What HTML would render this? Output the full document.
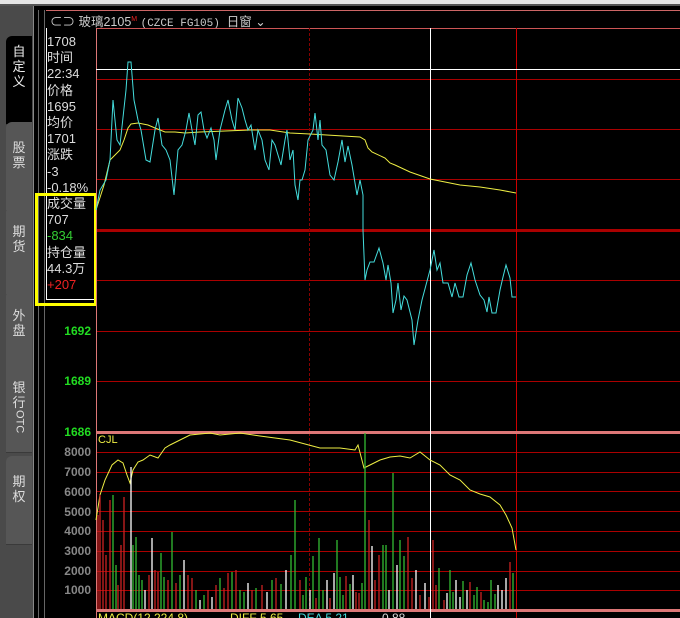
<!DOCTYPE html>
<html><head><meta charset="utf-8"><style>
body{margin:0;width:680px;height:618px;overflow:hidden;background:#000;font-family:"Liberation Sans","Noto Sans CJK SC",sans-serif;position:relative}
.a{position:absolute}
.tab{position:absolute;left:6px;width:26px;background:#565656;color:#ddd;font-size:13px;line-height:15px;text-align:center;border-top-left-radius:6px;border-bottom:1px solid #3a3a3a}
.p{position:absolute;left:47px;top:34px;color:#ddd;font-size:13px;line-height:16.2px;font-family:"Liberation Sans","Noto Sans CJK SC",sans-serif}
.yl{position:absolute;right:589px;font-size:12px;font-weight:bold;color:#888}
</style></head><body>
<div class="a" style="left:0;top:0;width:680px;height:4px;background:#e6e6e6"></div>
<div class="a" style="left:0;top:4px;width:680px;height:2px;background:#555"></div>
<div class="a" style="left:0;top:6px;width:33px;height:612px;background:#4a4a4a"></div>
<div class="tab" style="top:36px;height:80px;background:#000;color:#eee;padding-top:8px">自<br>定<br>义</div>
<div class="tab" style="top:122px;height:70px;padding-top:18px">股<br>票</div>
<div class="tab" style="top:206px;height:70px;padding-top:18px">期<br>货</div>
<div class="tab" style="top:290px;height:70px;padding-top:18px">外<br>盘</div>
<div class="tab" style="top:372px;height:72px;padding-top:8px">银<br>行<br><span style="display:inline-block;writing-mode:vertical-rl;font-size:11px">OTC</span></div>
<div class="tab" style="top:456px;height:70px;padding-top:18px">期<br>权</div>
<div class="a" style="left:33px;top:6px;width:1px;height:612px;background:#888"></div>
<div class="a" style="left:38px;top:10px;width:1px;height:608px;background:#666"></div>
<div class="a" style="left:44px;top:10px;width:1px;height:608px;background:#666"></div>
<div class="a" style="left:46px;top:10px;width:634px;height:1px;background:#c66"></div>
<div class="a" style="left:50px;top:11px;color:#ccc;font-size:12.5px;line-height:17px;white-space:nowrap">⊂⊃ 玻璃2105<sup style="color:#e22;font-size:7px">M</sup> <span style="font-family:'Liberation Mono',monospace;font-size:11px">(CZCE FG105)</span> &nbsp;日窗 ⌄</div>
<div class="a" style="left:46px;top:28px;width:49px;height:271px;border:1px solid #fff;border-top:none"></div>
<div class="p">1708<br>时间<br>22:34<br>价格<br>1695<br>均价<br>1701<br>涨跌<br>-3<br>-0.18%<br>成交量<br>707<br><span style="color:#3c3">-834</span><br>持仓量<br>44.3万<br><span style="color:#e22">+207</span></div>
<div class="a" style="left:35px;top:193px;width:56px;height:107px;border:3px solid #ff0"></div>
<div class="yl" style="top:324px;color:#2d2">1692</div>
<div class="yl" style="top:374px;color:#2d2">1689</div>
<div class="yl" style="top:425px;color:#2d2">1686</div>
<div class="yl" style="top:445px">8000</div><div class="yl" style="top:465px">7000</div><div class="yl" style="top:485px">6000</div><div class="yl" style="top:505px">5000</div><div class="yl" style="top:524px">4000</div><div class="yl" style="top:544px">3000</div><div class="yl" style="top:564px">2000</div><div class="yl" style="top:583px">1000</div>
<svg class="a" style="left:0;top:0" width="680" height="618">
<g stroke="#a00" stroke-width="1">
<line x1="96" y1="28.5" x2="680" y2="28.5" stroke="#c55"/>
<line x1="96" y1="79.5" x2="680" y2="79.5"/><line x1="96" y1="129.5" x2="680" y2="129.5"/><line x1="96" y1="179.5" x2="680" y2="179.5"/>
<line x1="96" y1="230.5" x2="680" y2="230.5" stroke-width="3"/>
<line x1="96" y1="280.5" x2="680" y2="280.5"/><line x1="96" y1="331.5" x2="680" y2="331.5"/><line x1="96" y1="381.5" x2="680" y2="381.5"/>
<line x1="96" y1="452.5" x2="680" y2="452.5"/><line x1="96" y1="472.5" x2="680" y2="472.5"/><line x1="96" y1="491.5" x2="680" y2="491.5"/><line x1="96" y1="511.5" x2="680" y2="511.5"/><line x1="96" y1="531.5" x2="680" y2="531.5"/><line x1="96" y1="551.5" x2="680" y2="551.5"/><line x1="96" y1="571.5" x2="680" y2="571.5"/><line x1="96" y1="590.5" x2="680" y2="590.5"/>
<line x1="309.5" y1="28" x2="309.5" y2="618" stroke-dasharray="3,2" stroke="#800"/>
<line x1="516.5" y1="28" x2="516.5" y2="618" stroke="#c00"/>
</g>
<line x1="96" y1="432.5" x2="680" y2="432.5" stroke="#d77" stroke-width="3"/>
<line x1="96" y1="610.5" x2="680" y2="610.5" stroke="#d77" stroke-width="3"/>
<line x1="96.5" y1="28" x2="96.5" y2="618" stroke="#d77"/>
<line x1="96" y1="69.5" x2="680" y2="69.5" stroke="#fff"/>
<line x1="430.5" y1="28" x2="430.5" y2="618" stroke="#fff"/>
<polyline fill="none" stroke="#ee4" stroke-width="1" points="96,210 104,185 110,160 115,155 120,150 124,140 128,128 131,124 138,123 148,125 155,128 165,132 175,132 185,133 200,132 250,130 270,130 290,133 310,134 360,137 365,140 368,148 372,152 385,158 390,163 395,165 410,172 430,179 460,185 480,187 500,190 516,193"/>
<polyline fill="none" stroke="#4dd" stroke-width="1" points="96,210 100,190 106,180 110,160 113,100 117,140 120,145 126,90 128,62 131,62 134,100 138,120 141,130 146,160 150,162 155,130 158,118 162,145 166,150 170,160 174,195 178,150 182,145 186,130 189,113 192,130 195,145 198,115 201,112 204,130 207,138 211,128 214,140 216,160 220,130 225,110 228,100 232,120 235,130 238,98 242,108 245,120 248,130 251,125 255,150 258,130 262,140 265,160 269,170 272,140 275,145 278,155 281,165 285,140 287,130 290,160 293,150 295,185 298,200 300,180 302,180 305,170 308,140 313,130 315,113 318,140 320,120 322,145 326,150 330,175 334,180 338,162 342,140 345,162 348,146 352,165 357,195 360,180 363,195 363,230 365,280 367,270 370,262 374,262 379,248 383,263 386,280 388,265 391,283 393,313 396,300 398,283 401,310 404,296 407,300 412,320 414,345 418,320 422,300 426,285 430,270 434,250 437,270 440,263 443,283 448,283 452,297 455,283 459,297 463,297 467,275 471,263 475,280 480,295 484,300 487,312 489,297 492,313 496,313 500,290 503,277 506,265 510,278 512,297 516,297"/>
<polyline fill="none" stroke="#ee4" points="96,520 100,495 105,480 112,465 118,460 123,463 127,475 130,483 133,470 138,462 143,460 150,455 158,458 165,448 170,445 180,440 190,435 200,434 210,433 220,435 240,433 260,436 290,440 320,448 340,448 355,450 358,445 364,468 370,465 380,460 390,457 400,456 410,458 420,452 430,460 440,465 450,475 460,480 470,490 480,494 490,497 500,505 506,515 512,528 516,550"/>
<g stroke-width="1.3">
<line x1="98" y1="609" x2="98" y2="515" stroke="#c22"/><line x1="100" y1="609" x2="100" y2="495" stroke="#c22"/><line x1="103" y1="609" x2="103" y2="520" stroke="#c22"/><line x1="106" y1="609" x2="106" y2="555" stroke="#c22"/><line x1="110" y1="609" x2="110" y2="500" stroke="#c22"/><line x1="113" y1="609" x2="113" y2="495" stroke="#3b3"/><line x1="116" y1="609" x2="116" y2="565" stroke="#3b3"/><line x1="118" y1="609" x2="118" y2="585" stroke="#c22"/><line x1="121" y1="609" x2="121" y2="545" stroke="#c22"/><line x1="124" y1="609" x2="124" y2="497" stroke="#c22"/><line x1="131" y1="609" x2="131" y2="467" stroke="#fff"/><line x1="133" y1="609" x2="133" y2="545" stroke="#3b3"/><line x1="136" y1="609" x2="136" y2="537" stroke="#3b3"/><line x1="139" y1="609" x2="139" y2="575" stroke="#3b3"/><line x1="142" y1="609" x2="142" y2="580" stroke="#3b3"/><line x1="145" y1="609" x2="145" y2="590" stroke="#fff"/><line x1="149" y1="609" x2="149" y2="575" stroke="#c22"/><line x1="152" y1="609" x2="152" y2="538" stroke="#fff"/><line x1="155" y1="609" x2="155" y2="570" stroke="#c22"/><line x1="158" y1="609" x2="158" y2="572" stroke="#c22"/><line x1="161" y1="609" x2="161" y2="553" stroke="#3b3"/><line x1="164" y1="609" x2="164" y2="577" stroke="#3b3"/><line x1="168" y1="609" x2="168" y2="580" stroke="#c22"/><line x1="172" y1="609" x2="172" y2="532" stroke="#3b3"/><line x1="176" y1="609" x2="176" y2="583" stroke="#c22"/><line x1="180" y1="609" x2="180" y2="575" stroke="#3b3"/><line x1="184" y1="609" x2="184" y2="560" stroke="#fff"/><line x1="188" y1="609" x2="188" y2="575" stroke="#c22"/><line x1="192" y1="609" x2="192" y2="578" stroke="#c22"/><line x1="196" y1="609" x2="196" y2="590" stroke="#3b3"/><line x1="200" y1="609" x2="200" y2="600" stroke="#fff"/><line x1="204" y1="609" x2="204" y2="595" stroke="#3b3"/><line x1="208" y1="609" x2="208" y2="590" stroke="#c22"/><line x1="212" y1="609" x2="212" y2="597" stroke="#fff"/><line x1="216" y1="609" x2="216" y2="585" stroke="#c22"/><line x1="220" y1="609" x2="220" y2="578" stroke="#3b3"/><line x1="224" y1="609" x2="224" y2="588" stroke="#c22"/><line x1="228" y1="609" x2="228" y2="573" stroke="#c22"/><line x1="232" y1="609" x2="232" y2="572" stroke="#3b3"/><line x1="236" y1="609" x2="236" y2="570" stroke="#c22"/><line x1="240" y1="609" x2="240" y2="590" stroke="#3b3"/><line x1="244" y1="609" x2="244" y2="592" stroke="#3b3"/><line x1="248" y1="609" x2="248" y2="583" stroke="#fff"/><line x1="252" y1="609" x2="252" y2="590" stroke="#c22"/><line x1="256" y1="609" x2="256" y2="588" stroke="#3b3"/><line x1="262" y1="609" x2="262" y2="585" stroke="#c22"/><line x1="267" y1="609" x2="267" y2="592" stroke="#fff"/><line x1="272" y1="609" x2="272" y2="580" stroke="#3b3"/><line x1="276" y1="609" x2="276" y2="578" stroke="#c22"/><line x1="281" y1="609" x2="281" y2="584" stroke="#3b3"/><line x1="286" y1="609" x2="286" y2="570" stroke="#fff"/><line x1="291" y1="609" x2="291" y2="555" stroke="#3b3"/><line x1="295" y1="609" x2="295" y2="500" stroke="#3b3"/><line x1="300" y1="609" x2="300" y2="580" stroke="#c22"/><line x1="303" y1="609" x2="303" y2="595" stroke="#3b3"/><line x1="306" y1="609" x2="306" y2="577" stroke="#3b3"/><line x1="310" y1="609" x2="310" y2="590" stroke="#fff"/><line x1="313" y1="609" x2="313" y2="556" stroke="#3b3"/><line x1="316" y1="609" x2="316" y2="598" stroke="#c22"/><line x1="319" y1="609" x2="319" y2="538" stroke="#3b3"/><line x1="323" y1="609" x2="323" y2="590" stroke="#3b3"/><line x1="327" y1="609" x2="327" y2="580" stroke="#fff"/><line x1="330" y1="609" x2="330" y2="598" stroke="#c22"/><line x1="334" y1="609" x2="334" y2="573" stroke="#fff"/><line x1="337" y1="609" x2="337" y2="540" stroke="#3b3"/><line x1="340" y1="609" x2="340" y2="577" stroke="#3b3"/><line x1="343" y1="609" x2="343" y2="595" stroke="#3b3"/><line x1="346" y1="609" x2="346" y2="576" stroke="#c22"/><line x1="350" y1="609" x2="350" y2="584" stroke="#3b3"/><line x1="353" y1="609" x2="353" y2="575" stroke="#fff"/><line x1="356" y1="609" x2="356" y2="592" stroke="#c22"/><line x1="359" y1="609" x2="359" y2="593" stroke="#c22"/><line x1="362" y1="609" x2="362" y2="583" stroke="#3b3"/><line x1="365" y1="609" x2="365" y2="433" stroke="#3b3"/><line x1="369" y1="609" x2="369" y2="520" stroke="#c22"/><line x1="372" y1="609" x2="372" y2="546" stroke="#fff"/><line x1="375" y1="609" x2="375" y2="580" stroke="#c22"/><line x1="379" y1="609" x2="379" y2="555" stroke="#c22"/><line x1="383" y1="609" x2="383" y2="545" stroke="#3b3"/><line x1="386" y1="609" x2="386" y2="545" stroke="#3b3"/><line x1="389" y1="609" x2="389" y2="590" stroke="#fff"/><line x1="393" y1="609" x2="393" y2="473" stroke="#3b3"/><line x1="397" y1="609" x2="397" y2="565" stroke="#fff"/><line x1="400" y1="609" x2="400" y2="540" stroke="#3b3"/><line x1="404" y1="609" x2="404" y2="556" stroke="#3b3"/><line x1="408" y1="609" x2="408" y2="537" stroke="#c22"/><line x1="412" y1="609" x2="412" y2="578" stroke="#c22"/><line x1="416" y1="609" x2="416" y2="570" stroke="#fff"/><line x1="420" y1="609" x2="420" y2="595" stroke="#c22"/><line x1="425" y1="609" x2="425" y2="583" stroke="#fff"/><line x1="429" y1="609" x2="429" y2="597" stroke="#c22"/><line x1="433" y1="609" x2="433" y2="540" stroke="#c22"/><line x1="436" y1="609" x2="436" y2="585" stroke="#c22"/><line x1="439" y1="609" x2="439" y2="568" stroke="#3b3"/><line x1="444" y1="609" x2="444" y2="600" stroke="#c22"/><line x1="447" y1="609" x2="447" y2="593" stroke="#fff"/><line x1="450" y1="609" x2="450" y2="570" stroke="#3b3"/><line x1="453" y1="609" x2="453" y2="592" stroke="#3b3"/><line x1="456" y1="609" x2="456" y2="580" stroke="#fff"/><line x1="460" y1="609" x2="460" y2="597" stroke="#fff"/><line x1="463" y1="609" x2="463" y2="581" stroke="#3b3"/><line x1="467" y1="609" x2="467" y2="590" stroke="#fff"/><line x1="470" y1="609" x2="470" y2="582" stroke="#c22"/><line x1="474" y1="609" x2="474" y2="595" stroke="#3b3"/><line x1="477" y1="609" x2="477" y2="587" stroke="#3b3"/><line x1="481" y1="609" x2="481" y2="592" stroke="#c22"/><line x1="484" y1="609" x2="484" y2="600" stroke="#3b3"/><line x1="488" y1="609" x2="488" y2="602" stroke="#3b3"/><line x1="491" y1="609" x2="491" y2="580" stroke="#3b3"/><line x1="495" y1="609" x2="495" y2="594" stroke="#3b3"/><line x1="498" y1="609" x2="498" y2="585" stroke="#fff"/><line x1="502" y1="609" x2="502" y2="590" stroke="#fff"/><line x1="506" y1="609" x2="506" y2="578" stroke="#fff"/><line x1="510" y1="609" x2="510" y2="562" stroke="#c22"/><line x1="513" y1="609" x2="513" y2="573" stroke="#3b3"/>
</g>
<text x="98" y="443" fill="#ee4" font-size="11" font-family="Liberation Sans">CJL</text>
<text x="98" y="622" fill="#ee4" font-size="12" font-family="Liberation Sans">MACD(12,224,8)</text>
<text x="230" y="622" fill="#ee4" font-size="12" font-family="Liberation Sans">DIFF  5.65</text>
<text x="298" y="622" fill="#4dd" font-size="12" font-family="Liberation Sans">DEA  5.21</text>
<text x="382" y="622" fill="#ddd" font-size="12" font-family="Liberation Sans">0.88</text>
</svg>
</body></html>
